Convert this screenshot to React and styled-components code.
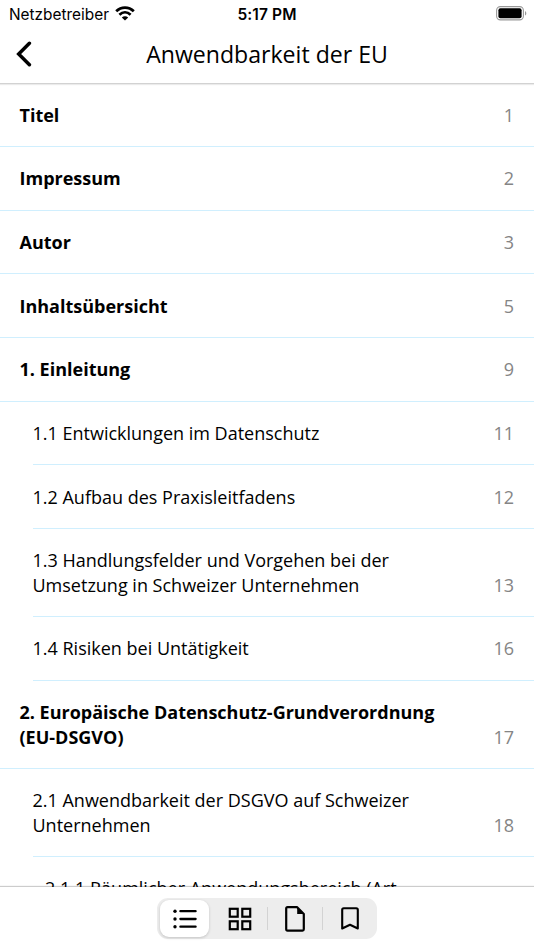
import React, { useState } from 'react';
import styled, { createGlobalStyle, css } from 'styled-components';

const GlobalStyle = createGlobalStyle`
  * {
    box-sizing: border-box;
  }
  body {
    margin: 0;
    background: #fff;
  }
`

const chapters = [
  { title: 'Titel', page: 1, level: 0 },
  { title: 'Impressum', page: 2, level: 0 },
  { title: 'Autor', page: 3, level: 0 },
  { title: 'Inhaltsübersicht', page: 5, level: 0 },
  { title: '1. Einleitung', page: 9, level: 0 },
  { title: '1.1 Entwicklungen im Datenschutz', page: 11, level: 1 },
  { title: '1.2 Aufbau des Praxisleitfadens', page: 12, level: 1 },
  { title: '1.3 Handlungsfelder und Vorgehen bei der Umsetzung in Schweizer Unternehmen', page: 13, level: 1 },
  { title: '1.4 Risiken bei Untätigkeit', page: 16, level: 1 },
  { title: '2. Europäische Datenschutz-Grundverordnung (EU-DSGVO)', page: 17, level: 0 },
  { title: '2.1 Anwendbarkeit der DSGVO auf Schweizer Unternehmen', page: 18, level: 1 },
  { title: '2.1.1 Räumlicher Anwendungsbereich (Art.', level: 2 },
];

const WifiIcon = () => (
  <svg width="20" height="15" viewBox="0 0 20 15" fill="none" stroke="#000" strokeWidth="2.7">
    <path d="M1.2 5.3C6.2 .3 13.8 .3 18.8 5.3" />
    <path d="M4.4 8.7C7.7 5.6 12.3 5.6 15.6 8.7" />
    <path d="M10 14.6L6.8 11.5C8.6 9.8 11.4 9.8 13.2 11.5Z" fill="#000" stroke="none" />
  </svg>
)

const BatteryIcon = () => (
  <svg width="32" height="15" viewBox="0 0 32 15">
    <rect x=".6" y=".6" width="26.8" height="13.3" rx="3.8" fill="none" stroke="#999" strokeWidth="1.1" />
    <rect x="2.4" y="2.3" width="23.2" height="9.9" rx="2" />
    <path d="M29 5V9.6C30.8 8.8 30.8 5.8 29 5Z" fill="#999" />
  </svg>
)

const ListIcon = () => (
  <svg width="24" height="20" viewBox="0 0 24 20">
    <circle cx="2" cy="2.2" r="1.7" />
    <circle cx="2" cy="10" r="1.7" />
    <circle cx="2" cy="17.7" r="1.7" />
    <path d="M7.4 2.2H22.6M7.4 10H22.6M7.4 17.7H22.6" stroke="#000" strokeWidth="2.3" strokeLinecap="round" />
  </svg>
)

const GridIcon = () => (
  <svg width="24" height="24" viewBox="0 0 24 24" fill="none" stroke="#000" strokeWidth="2.2">
    <rect x="1.8" y="1.8" width="7.9" height="7.9" />
    <rect x="14.3" y="1.8" width="7.9" height="7.9" />
    <rect x="1.8" y="14.3" width="7.9" height="7.9" />
    <rect x="14.3" y="14.3" width="7.9" height="7.9" />
  </svg>
)

const PageIcon = () => (
  <svg width="20" height="26" viewBox="0 0 20 26" fill="none" stroke="#000" strokeWidth="2.2" strokeLinejoin="round">
    <path d="M2.5 1.2H12.2L18.8 8V23.3Q18.8 24.6 17.5 24.6H2.5Q1.2 24.6 1.2 23.3V2.5Q1.2 1.2 2.5 1.2Z" />
    <path d="M12.2 1.4V8H18.6Z" fill="#000" stroke="none" />
  </svg>
)

const BookmarkIcon = () => (
  <svg width="18" height="23" viewBox="0 0 18 23" fill="none" stroke="#000" strokeWidth="2.1" strokeLinejoin="round">
    <path d="M1.2 21.5V2.8Q1.2 1.3 2.7 1.3H15.3Q16.8 1.3 16.8 2.8V21.5L9 17.8Z" />
  </svg>
)

const tabs = [
  { id: 'list', icon: <ListIcon />, label: 'Inhalt' },
  { id: 'grid', icon: <GridIcon />, label: 'Übersicht' },
  { id: 'page', icon: <PageIcon />, label: 'Seite' },
  { id: 'bookmark', icon: <BookmarkIcon />, label: 'Lesezeichen' },
];

export default function App() {
  const [active, setActive] = useState('list');

  return (
    <Screen>
      <GlobalStyle />
      <StatusBar>
        <Carrier>Netzbetreiber <WifiIcon /></Carrier>
        <Clock>5:17 PM</Clock>
        <Battery><BatteryIcon /></Battery>
      </StatusBar>
      <Header>
        <BackButton aria-label="Zurück">
          <svg width="16" height="26" viewBox="0 0 16 26" fill="none" stroke="#000" strokeWidth="3.5" strokeLinecap="round" strokeLinejoin="miter">
            <path d="M13.4 2.3L2.7 13L13.4 23.7" />
          </svg>
        </BackButton>
        <Title>Anwendbarkeit der EU</Title>
      </Header>
      <Contents>
        {chapters.map(chapter => (
          <Row key={chapter.title} $level={chapter.level}>
            <RowTitle $bold={chapter.level === 0}>{chapter.title}</RowTitle>
            {chapter.page && <PageNumber>{chapter.page}</PageNumber>}
          </Row>
        ))}
      </Contents>
      <Footer>
        <Segments>
          {tabs.map((tab, i) => (
            <Segment
              key={tab.id}
              aria-label={tab.label}
              $active={active === tab.id}
              $divider={i > 1}
              onClick={() => setActive(tab.id)}
            >
              {tab.icon}
            </Segment>
          ))}
        </Segments>
      </Footer>
    </Screen>
  )
}

const Screen = styled.div`
  display: flex;
  flex-direction: column;
  width: 534px;
  height: 950px;
  overflow: hidden;
  background: #fff;
  color: #000;
  font-family: 'Open Sans', sans-serif;
`

const StatusBar = styled.div`
  display: grid;
  grid-template-columns: 1fr auto 1fr;
  align-items: center;
  flex: none;
  height: 28px;
  padding: 0 6px 0 9px;
  font-family: Inter, sans-serif;
  font-size: 15.5px;
`

const Carrier = styled.div`
  display: flex;
  align-items: center;
  gap: 6px;
  font-size: 15.4px;
  & > svg {
    margin-top: -2px;
  }
`

const Clock = styled.div`
  margin-right: 3px;
  font-weight: 600;
  letter-spacing: 0.1px;
`

const Battery = styled.div`
  display: flex;
  justify-content: flex-end;
  margin-top: -2px;
`

const Header = styled.header`
  display: grid;
  grid-template-columns: 40px 1fr 40px;
  align-items: center;
  flex: none;
  height: 56px;
  padding: 0 14px 3px;
  border-bottom: 1px solid #d2d2d2;
  box-shadow: 0 1px 1px rgba(0, 0, 0, 0.08);
`

const iconButton = css`
  display: flex;
  align-items: center;
  border: 0;
  background: none;
  cursor: pointer;
`

const BackButton = styled.button`
  ${iconButton}
  padding: 0 2px;
`

const Title = styled.h1`
  margin: 0;
  font-size: 23.1px;
  font-weight: 400;
  line-height: 32px;
  text-align: center;
`

const Contents = styled.div`
  flex: 1;
  min-height: 0;
  margin-top: -0.7px;
  overflow: hidden;
`

const indents = ['19.5px', '32.5px', '45px'];

const Row = styled.div`
  display: flex;
  align-items: flex-end;
  justify-content: space-between;
  margin-left: ${p => (p.$level ? indents[p.$level] : 0)};
  padding: 19.37px 20px 18.8px ${p => (p.$level ? 0 : indents[0])};
  border-bottom: 1px solid #d0effe;
  font-size: 18px;
  line-height: 24.5px;
`

const RowTitle = styled.div`
  max-width: 420px;
  font-weight: ${p => (p.$bold ? 700 : 400)};
`

const PageNumber = styled.div`
  color: #858585;
`

const Footer = styled.footer`
  position: relative;
  display: flex;
  justify-content: center;
  flex: none;
  height: 63px;
  padding-top: 11px;
  background: #fff;
  box-shadow: 0 -1px 1px rgba(0, 0, 0, 0.2);
`

const Segments = styled.div`
  display: flex;
  width: 220px;
  height: 41px;
  padding: 2px 0 2px 3px;
  border-radius: 11px;
  background: #ededed;
`

const Segment = styled.button`
  ${iconButton}
  position: relative;
  justify-content: center;
  width: 55px;
  padding: 0;
  ${p => p.$active && css`
    width: 49px;
    margin-right: 3px;
    border-radius: 9px;
    background: #fff;
    box-shadow: 0 1px 3px rgba(0, 0, 0, 0.18);
  `}
  ${p => p.$divider && css`
    &::before {
      content: '';
      position: absolute;
      left: 0;
      top: 7px;
      width: 1px;
      height: 23px;
      background: #d3d3d3;
    }
  `}
`
